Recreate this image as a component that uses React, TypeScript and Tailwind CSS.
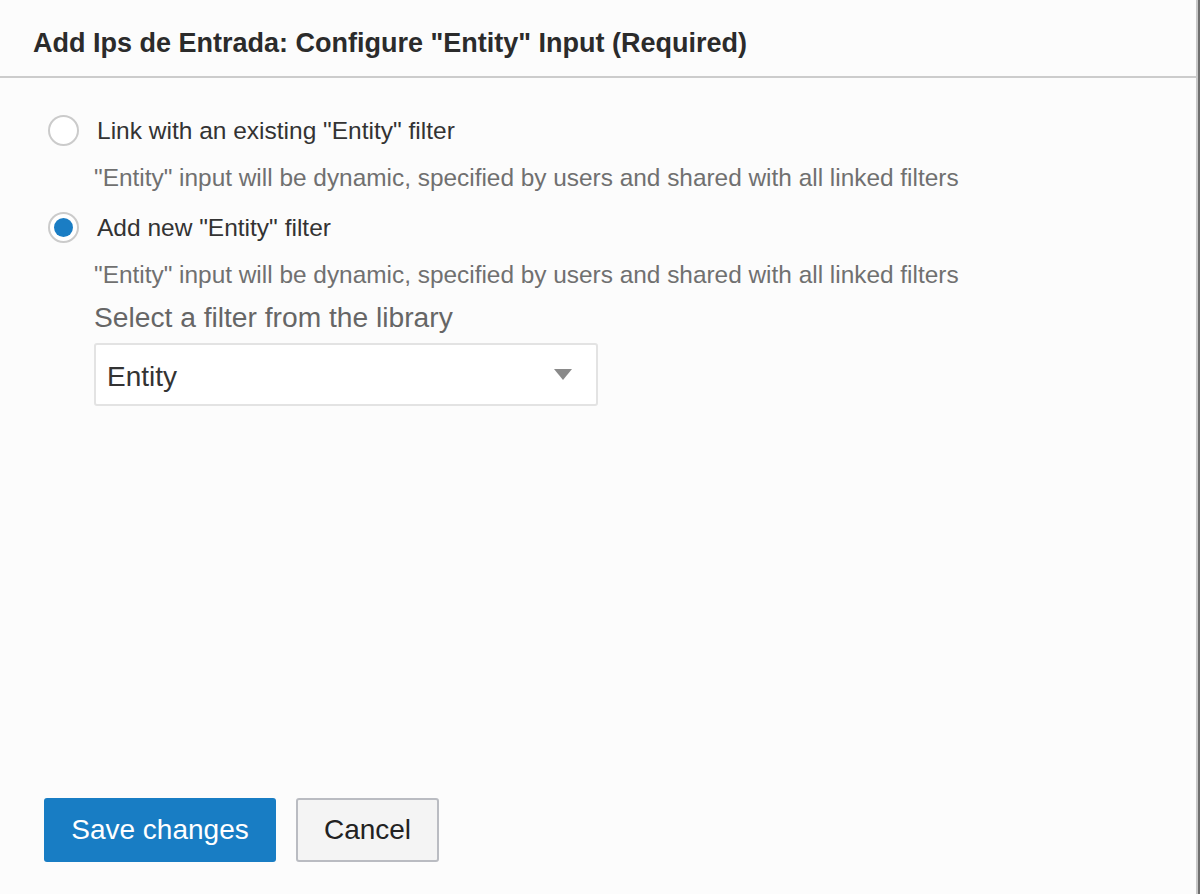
import React from "react";

export default function App() {
  return (
    <div
      className="flex h-[894px] w-[1200px] bg-[#6f6f6f]"
      style={{ fontFamily: '"Liberation Sans", Arial, sans-serif' }}
    >
      <div className="flex h-full w-[1198px] flex-col border-r-2 border-[#c8c8c8] bg-[#fcfcfc]">
        <div className="flex h-[78px] shrink-0 items-center border-b-2 border-[#cccccc] pl-[33px] pt-[10px]">
          <h1 className="text-[27px] leading-[32px] font-bold text-[#2b2b2b]">
            Add Ips de Entrada: Configure "Entity" Input (Required)
          </h1>
        </div>
        <div className="flex flex-1 flex-col pl-[48px] pt-[37px]">
          <div className="flex h-[31px] items-center gap-[18px]">
            <span className="h-[31px] w-[31px] shrink-0 rounded-full border-2 border-[#cbcbcb] bg-white" />
            <span className="text-[24.5px] leading-[28px] text-[#333333]">Link with an existing "Entity" filter</span>
          </div>
          <div className="mt-[18px] pl-[46px] text-[24.4px] leading-[28px] text-[#707070]">
            "Entity" input will be dynamic, specified by users and shared with all linked filters
          </div>
          <div className="mt-[20px] flex h-[31px] items-center gap-[18px]">
            <span className="flex h-[31px] w-[31px] shrink-0 items-center justify-center rounded-full border-2 border-[#cbcbcb] bg-white">
              <span className="h-[19px] w-[19px] rounded-full bg-[#1a7dc4]" />
            </span>
            <span className="text-[24.5px] leading-[28px] text-[#333333]">Add new "Entity" filter</span>
          </div>
          <div className="mt-[18px] pl-[46px] text-[24.4px] leading-[28px] text-[#707070]">
            "Entity" input will be dynamic, specified by users and shared with all linked filters
          </div>
          <div className="mt-[12px] pl-[46px] text-[28.2px] leading-[32px] text-[#666666]">
            Select a filter from the library
          </div>
          <div className="ml-[46px] mt-[10px] flex h-[63px] w-[504px] items-center justify-between rounded-[3px] border-2 border-[#e3e3e3] bg-white pl-[11px] pr-[24px] pt-[4px]">
            <span className="text-[28px] leading-[32px] text-[#333333]">Entity</span>
            <svg width="18" height="11" viewBox="0 0 18 11" className="-mt-[4px]">
              <polygon points="0,0 18,0 9,11" fill="#8a8a8a" />
            </svg>
          </div>
        </div>
        <div className="flex shrink-0 gap-[20px] pb-[32px] pl-[44px]">
          <button className="h-[64px] w-[232px] rounded-[3px] bg-[#187dc4] text-[28px] text-white">
            Save changes
          </button>
          <button className="h-[64px] w-[143px] rounded-[3px] border-2 border-[#babcc2] bg-[#f4f4f4] text-[28px] text-[#222222]">
            Cancel
          </button>
        </div>
      </div>
    </div>
  );
}
